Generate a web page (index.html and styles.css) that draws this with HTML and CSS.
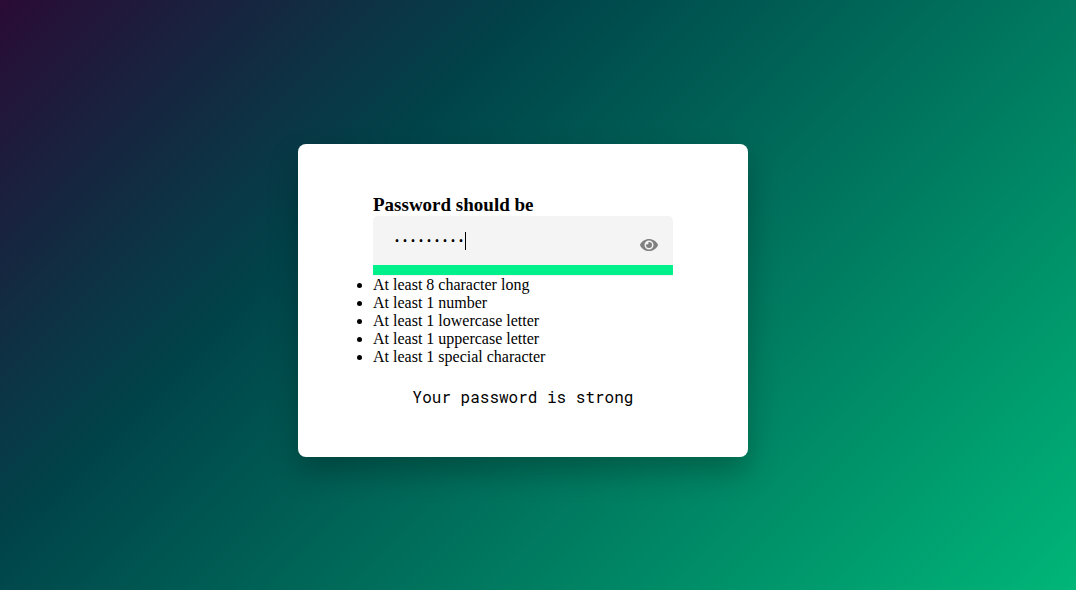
FILE: index.html
```html
<!DOCTYPE html>
<html lang="en">
<head>
  <meta charset="utf-8">
  <meta name="viewport" content="width=device-width, initial-scale=1">
  <title>Password strength</title>
  <link rel="stylesheet" href="styles.css">
</head>
<body>
  <main class="page">
    <form class="card">
      <h3 class="card-title"><label for="password">Password should be</label></h3>
      <div class="field">
        <div class="field-row">
          <input class="field-input" id="password" type="password" value="Abcdef1!x" autocomplete="off">
          <span class="field-caret" aria-hidden="true"></span>
          <button class="field-toggle" type="button" aria-label="Show password">
            <svg class="field-icon" viewBox="0 0 576 512" aria-hidden="true"><path fill="currentColor" d="M572.52 241.4C518.29 135.59 410.93 64 288 64S57.68 135.64 3.48 241.41a32.35 32.35 0 0 0 0 29.19C57.71 376.41 165.07 448 288 448s230.32-71.64 284.52-177.41a32.35 32.35 0 0 0 0-29.19zM288 400a144 144 0 1 1 144-144 143.93 143.93 0 0 1-144 144zm0-240a95.31 95.31 0 0 0-25.31 3.79 47.85 47.85 0 0 1-66.9 66.9A95.78 95.78 0 1 0 288 160z"/></svg>
          </button>
        </div>
        <div class="strength"></div>
      </div>
      <ul class="rules">
        <li>At least 8 character long</li>
        <li>At least 1 number</li>
        <li>At least 1 lowercase letter</li>
        <li>At least 1 uppercase letter</li>
        <li>At least 1 special character</li>
      </ul>
      <p class="status">Your password is strong</p>
    </form>
  </main>
</body>
</html>
```
FILE: styles.css
```css
* {
  box-sizing: border-box;
  margin: 0;
  padding: 0;
}

body {
  font-family: "Liberation Serif", "Times New Roman", serif;
  font-size: 16px;
}

.page {
  display: grid;
  place-items: center;
  min-height: 100vh;
  padding: 10px 30px 0 0;
  background: linear-gradient(135deg, #2a0b36, #00444a 33%, #00b678);
}

.card {
  width: 100%;
  max-width: 450px;
  padding: 50px 75px;
  border-radius: 8px;
  background: #fff;
  box-shadow: 0 15px 30px rgba(0, 0, 0, 0.25);
}

.card-title {
  font-size: 19px;
  line-height: 22px;
}

.field {
  padding-bottom: 1px;
  border-radius: 5px 5px 0 0;
  background: #f4f4f4;
}

.field-row {
  position: relative;
}

.field-input {
  display: block;
  width: 100%;
  height: 49px;
  padding: 0 50px 0 20px;
  border: 0;
  outline: 0;
  background: transparent;
  color: #000;
  font-family: "Roboto Mono", "DejaVu Sans Mono", monospace;
}

.field-caret {
  position: absolute;
  top: 16px;
  left: 92px;
  width: 1px;
  height: 18px;
  background: #000;
}

.field-toggle {
  position: absolute;
  top: 21px;
  right: 15px;
  border: 0;
  background: none;
  color: #808080;
  cursor: pointer;
}

.field-icon {
  display: block;
  width: 18px;
  height: 16px;
}

.strength {
  height: 10px;
  background: #00f08c;
}

.rules {
  line-height: 18px;
}

.status {
  margin-top: 20px;
  font-family: "Roboto Mono", "DejaVu Sans Mono", monospace;
  line-height: 21px;
  text-align: center;
}
```
